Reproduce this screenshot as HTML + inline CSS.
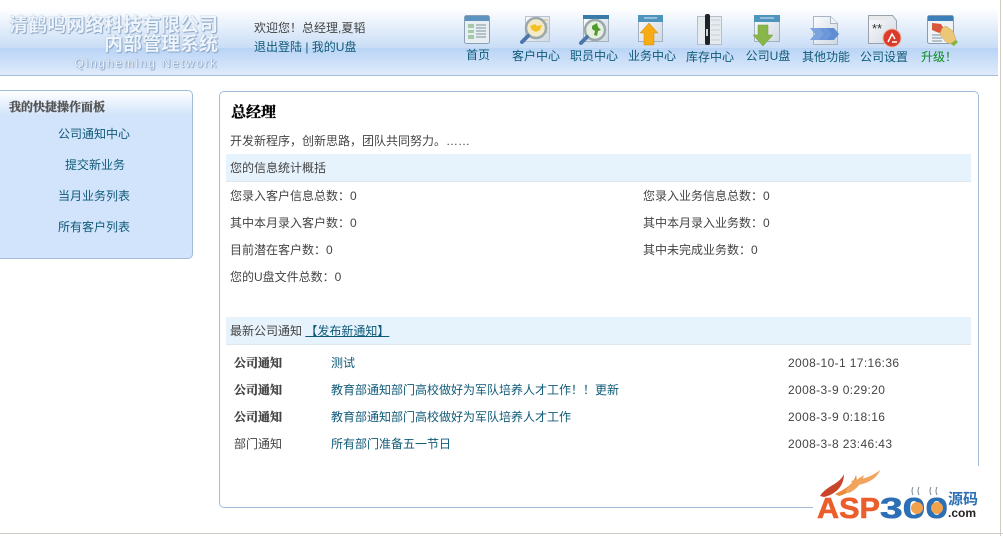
<!DOCTYPE html>
<html lang="zh"><head><meta charset="utf-8"><title>内部管理系统</title>
<style>
html,body{margin:0;padding:0;background:#fff}
#p{position:relative;width:1003px;height:536px;overflow:hidden;background:#fff;font:12px/16px "Liberation Sans","Noto Sans CJK SC",sans-serif;color:#444}
#p div,#p svg{position:absolute}
.t{white-space:nowrap}
.l{color:#0f5a78}
.n{color:#0f5a78;width:70px;text-align:center}
.s{font-family:"Liberation Serif","Noto Serif CJK SC",serif;font-weight:700;-webkit-text-stroke:.35px currentColor}
.d{letter-spacing:.37px}
.h{color:#eef4fc;text-shadow:0 0 1px #7f9bbd,1px 1px 1px #8aa5c6;font-family:"Liberation Sans","Noto Sans CJK SC",sans-serif;font-weight:700}
</style></head><body><div id="p">
<div style="left:0;top:0;width:998px;height:48px;background:linear-gradient(#fff 0,#fff 8px,#c9ddf6 48px)"></div>
<div style="left:0;top:48px;width:998px;height:27px;background:linear-gradient(#b9d4f6,#dfebfb)"></div>
<div style="left:0;top:75px;width:998px;height:1px;background:#a5bdd8"></div>

<div class="t h" style="right:785px;top:15px;font-size:19px;line-height:22px">清鹤鸣网络科技有限公司</div>
<div class="t h" style="right:785px;top:35px;font-size:19px;line-height:20px">内部管理系统</div>
<div class="t" style="right:785px;top:56px;font:12px/14px 'Liberation Sans',sans-serif;letter-spacing:1.75px;color:#eef4fc;text-shadow:0 0 1px #6f8cb0,1px 1px 1px #8aa5c6">Qingheming Network</div>

<div class="t" style="left:254px;top:20px">欢迎您！总经理,夏韬</div>
<div class="t l" style="left:254px;top:39px">退出登陆 | 我的U盘</div>

<svg style="left:459px;top:11px" width="505" height="38" viewBox="0 0 505 38">
<defs><linearGradient id="w" x1="0" y1="0" x2="1" y2="1"><stop offset="0" stop-color="#fbfcfd"/><stop offset="1" stop-color="#cfd8e2"/></linearGradient></defs>
<!-- home -->
<rect x="5.500" y="4.500" width="25" height="28" rx="2" fill="#e8eff2" stroke="#8aa0b5"/><rect x="6" y="5" width="24" height="5" fill="#5c94bf"/><path d="M9 13h6v4H9zM9 19h6v3H9zM9 24h6v4H9z" fill="#a5c9a8"/><path d="M17 14h10M17 17h10M17 20h10M17 23h10M17 26h10" stroke="#7d919f"/>
<!-- customers -->
<path d="M66.500 5.500h24v25h-24z" fill="url(#w)" stroke="#b9c3ce"/><path d="M84 9h5M84 13h5M85 17h4M85 21h4" stroke="#e1b96c"/><circle cx="77" cy="17" r="10" fill="#f4e9c6" stroke="#9aa9ab" stroke-width="2.500"/><path d="M71 15l5-2 2 2 5-1-2 5-4 2-4-2z" fill="#f2c225"/><path d="M69 25l-6 6" stroke="#4d76ab" stroke-width="4" stroke-linecap="round"/>
<!-- staff -->
<path d="M124.500 4.500h25v26h-25z" fill="url(#w)" stroke="#a4b2c0"/><rect x="124" y="4" width="26" height="4" fill="#397aa9"/><circle cx="136" cy="19" r="10" fill="#e7f0df" stroke="#9aa9ab" stroke-width="2.500"/><path d="M133 15l5-3 1 4 3 3-3 1-1 5-3-1 1-4-3-2z" fill="#4f9b30"/><path d="M128 26l-6 6" stroke="#4d76ab" stroke-width="4" stroke-linecap="round"/>
<!-- business -->
<path d="M179.500 4.500h24v26h-24z" fill="url(#w)" stroke="#a4b2c0"/><rect x="179" y="4" width="25" height="7" fill="#4d94bf"/><path d="M185 7h13" stroke="#dbeaf2"/><path d="M190 12l9 10h-4v12h-10v-12h-4z" fill="#f6ac12" stroke="#c98a14" stroke-width=".5"/>
<!-- stock -->
<path d="M238.500 5.500h24v28h-24z" fill="#e6ebef" stroke="#b5bfca"/><path d="M252 9h9M252 14h9M252 19h9M252 24h9M252 29h9" stroke="#c5ced6"/><rect x="246" y="3" width="5" height="31" rx="2" fill="#1f2226"/><rect x="247" y="18" width="2" height="7" fill="#ced3d7"/>
<!-- upan -->
<path d="M295.500 4.500h25v26h-25z" fill="url(#w)" stroke="#a4b2c0"/><rect x="295" y="4" width="26" height="7" fill="#4d94bf"/><path d="M301 7h14" stroke="#dbeaf2"/><path d="M299 14h10v10h5l-10 11-10-11h5z" fill="#88b64a" stroke="#6f9a3a" stroke-width=".5"/>
<!-- other -->
<path d="M354.500 5.500h17l7 7v21h-24z" fill="url(#w)" stroke="#aab4c2"/><path d="M371.500 5.500v7h7" fill="#eef1f5" stroke="#aab4c2"/><path d="M351 17h8l5 6-5 6h-8l5-6z" fill="#7ba4de"/><path d="M359 17h8l5 6-5 6h-8l5-6z" fill="#6c98da"/><path d="M367 17h8l5 6-5 6h-8l5-6z" fill="#5f8dd4"/>
<!-- settings -->
<path d="M409.500 4.500h24l4 5v23h-28z" fill="url(#w)" stroke="#9aa3ad"/><path d="M410 5h23v4h-23z" fill="#e9eaec"/><text x="413" y="22" font-family="Liberation Sans" font-size="13" fill="#333">**</text><circle cx="433" cy="27" r="9" fill="#da3c2c" stroke="#f2b3a2"/><path d="M429 31l4-8 3 5M433 31h5" stroke="#fff" stroke-width="1.500" fill="none"/>
<!-- upgrade -->
<rect x="468.500" y="4.500" width="26" height="28" rx="2" fill="#eef3f7" stroke="#8a9db0"/><rect x="469" y="5" width="25" height="5" fill="#3c7fb8"/><path d="M473 12l9 1 4 6-6 3-7-3z" fill="#d9573b"/><path d="M473 24h10M473 27h10M473 30h10" stroke="#7d919f"/><path d="M483 17l4-2 7 5 3 9-6 4-5-3-5-7z" fill="#ecc778" stroke="#c79a4c" stroke-width=".5"/><path d="M492 33l5-4 2 2-4 4z" fill="#7db83e"/>
</svg>

<div class="t n" style="left:443px;top:47px">首页</div>
<div class="t n" style="left:501px;top:48px">客户中心</div>
<div class="t n" style="left:559px;top:48px">职员中心</div>
<div class="t n" style="left:617px;top:48px">业务中心</div>
<div class="t n" style="left:675px;top:49px">库存中心</div>
<div class="t n" style="left:733px;top:48px">公司U盘</div>
<div class="t n" style="left:791px;top:49px">其他功能</div>
<div class="t n" style="left:849px;top:49px">公司设置</div>
<div class="t n" style="left:904px;top:49px;color:#0a8a1e">升级！</div>

<div style="left:-6px;top:90px;width:197px;height:167px;border:1px solid #a3bcd8;border-radius:5px;background:linear-gradient(#fff 0,#d2e4fb 24px,#d2e4fb)"></div>
<div class="t s" style="left:9px;top:99px;color:#555">我的快捷操作面板</div>
<div class="t l" style="left:58px;top:126px">公司通知中心</div>
<div class="t l" style="left:65px;top:157px">提交新业务</div>
<div class="t l" style="left:58px;top:188px">当月业务列表</div>
<div class="t l" style="left:58px;top:219px">所有客户列表</div>

<div style="left:219px;top:91px;width:758px;height:415px;border:1px solid #a3bcd8;border-radius:5px;background:#fff"></div>
<div class="t s" style="left:231px;top:103px;font-size:15px;line-height:20px;color:#000">总经理</div>
<div class="t" style="left:230px;top:133px">开发新程序，创新思路，团队共同努力。……</div>
<div style="left:226px;top:154px;width:745px;height:27px;background:#e6f2fc;border-bottom:1px solid #dfe6ec"></div>
<div class="t" style="left:230px;top:160px">您的信息统计概括</div>
<div class="t" style="left:230px;top:188px">您录入客户信息总数：0</div>
<div class="t" style="left:643px;top:188px">您录入业务信息总数：0</div>
<div class="t" style="left:230px;top:215px">其中本月录入客户数：0</div>
<div class="t" style="left:643px;top:215px">其中本月录入业务数：0</div>
<div class="t" style="left:230px;top:242px">目前潜在客户数：0</div>
<div class="t" style="left:643px;top:242px">其中未完成业务数：0</div>
<div class="t" style="left:230px;top:269px">您的U盘文件总数：0</div>
<div style="left:226px;top:317px;width:745px;height:27px;background:#e6f2fc;border-bottom:1px solid #dfe6ec"></div>
<div class="t" style="left:230px;top:323px">最新公司通知 <span class="l" style="text-decoration:underline">【发布新通知】</span></div>

<div class="t s" style="left:234px;top:355px">公司通知</div><div class="t l" style="left:331px;top:355px">测试</div><div class="t d" style="left:788px;top:355px">2008-10-1 17:16:36</div>
<div class="t s" style="left:234px;top:382px">公司通知</div><div class="t l" style="left:331px;top:382px">教育部通知部门高校做好为军队培养人才工作！！更新</div><div class="t d" style="left:788px;top:382px">2008-3-9 0:29:20</div>
<div class="t s" style="left:234px;top:409px">公司通知</div><div class="t l" style="left:331px;top:409px">教育部通知部门高校做好为军队培养人才工作</div><div class="t d" style="left:788px;top:409px">2008-3-9 0:18:16</div>
<div class="t" style="left:234px;top:436px">部门通知</div><div class="t l" style="left:331px;top:436px">所有部门准备五一节日</div><div class="t d" style="left:788px;top:436px">2008-3-8 23:46:43</div>

<div style="left:813px;top:466px;width:170px;height:62px;background:#fff"></div>
<svg style="left:815px;top:465px" width="170" height="58" viewBox="0 0 170 58">
<path d="M5 31C12 20 24 20 29 9 29 20 22 29 9 32z" fill="#c8452c"/><path d="M20 29C30 24 38 20 41 10 44 20 36 28 24 31z" fill="#ec8b3c"/><path d="M30 26C36 18 40 16 49 10 47 18 42 24 34 28z" fill="#f0a45c"/><path d="M36 16C44 14 54 14 65 5 62 14 50 20 40 20z" fill="#f0a45c"/>
<text x="2" y="53" font-family="Liberation Sans" font-size="29" font-weight="700" fill="#ec5d2c" stroke="#ec5d2c" stroke-width=".6" textLength="63" lengthAdjust="spacingAndGlyphs">ASP</text>
<text x="65" y="53" font-family="Liberation Sans" font-size="29" font-weight="700" fill="#2c6fb5" stroke="#2c6fb5" stroke-width=".6" textLength="68" lengthAdjust="spacingAndGlyphs">300</text>
<circle cx="102" cy="43" r="6" fill="#f3a24c"/><circle cx="122" cy="43" r="6" fill="#f3a24c"/>
<path d="M98 30q-2-4 0-8M104 30q-2-4 0-8M116 30q-2-4 0-8M122 30q-2-4 0-8" stroke="#7f878f" fill="none"/>
<text x="133" y="39" font-family="Liberation Sans,Noto Sans CJK SC,sans-serif" font-size="15" font-weight="700" fill="#2c6fb5">源码</text>
<text x="133" y="52" font-family="Liberation Sans" font-size="12" font-weight="700" fill="#222">.com</text>
</svg>

<div style="left:1000px;top:0;width:1px;height:536px;background:#d0ccc4"></div>
<div style="left:0;top:533px;width:1003px;height:1px;background:#d0ccc4"></div>
</div></body></html>
